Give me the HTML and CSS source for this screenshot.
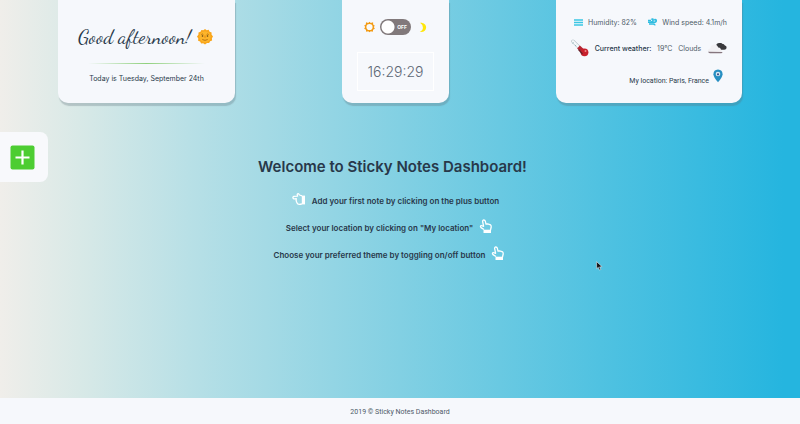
FILE: index.html
```html
<!DOCTYPE html>
<html lang="en">
<head>
<meta charset="utf-8">
<title>Sticky Notes Dashboard</title>
<link rel="stylesheet" href="styles.css">
</head>
<body>
<svg class="defs" aria-hidden="true">
  <symbol id="hand" viewBox="0 0 14 15">
    <path d="M5 10.500L2 8.600Q.8 7.200 2.200 6.500L4.600 7.300 3.600 2.400Q3.600 1 4.800 1T6.300 2.200L7 5.200l1.600-.4 1.600.5 1.300.5q.8.700.7 2.200L11.500 11" fill="none" stroke="#fff" stroke-width="1.300" stroke-linejoin="round"/>
    <path d="M4.500 10.700h7.500v3.300H4.500z" fill="#fff"/>
  </symbol>
  <symbol id="hand-left" viewBox="0 0 14 13">
    <path d="M10 2.800L7.500 2 6.700.8Q5.400.3 5.200 1.600L5.600 3.200 1.800 3.300Q.600 3.800 1 5T2.600 5.800L4.300 5.600 4.100 7.300 4.600 9 5.500 10.800Q7 11.800 10 10.800" fill="none" stroke="#fff" stroke-width="1.300" stroke-linejoin="round"/>
    <path d="M9.800 2.600h3.200v8.800H9.800z" fill="#fff"/>
  </symbol>
</svg>
<header class="top">
  <section class="card greeting">
    <h2 class="hello">Good afternoon!
      <svg class="face" viewBox="0 0 16 16" aria-hidden="true">
        <path d="M8 0l1.700 1.200 2-.4.900 1.900 2 .7-.1 2.100L16 7.500 14.900 9.300l.2 2.100-2 .8-1 1.900-2.100-.2L8 15.600l-1.800-1.400-2.100.2-1-1.900-2-.8.2-2.200L0 7.500l1.400-1.700.1-2.200 2-.8.900-1.900 2 .4z" fill="#f9a51a"/>
        <circle cx="8" cy="7.800" r="5.600" fill="#fdb52b"/>
        <path d="M4.300 5.500q1-1 2 0M9.700 5.500q1-1 2 0M5.300 10.500q2.700 1.700 5.400 0" fill="none" stroke="#a8630c" stroke-width=".8"/>
        <circle cx="5.500" cy="7" r=".8" fill="#60400f"/><circle cx="10.500" cy="7" r=".8" fill="#60400f"/>
        <path d="M8 6.500v2.200" stroke="#e6820f"/>
      </svg>
    </h2>
    <hr class="rule">
    <p class="date">Today is Tuesday, September 24th</p>
  </section>
  <section class="card clock">
    <div class="theme">
      <svg class="sun" viewBox="0 0 12 12" aria-hidden="true">
        <path d="M6 .2l1.400 1.500 2.500-.8.100 2.400 1.800 1.200L10.700 6l1.100 1.800-1.900 1.100-.3 2.200-2.200-.6L6 11.800l-1.400-1.300-2.200.6-.3-2.200L.2 7.800 1.300 6 .2 4.300 2 3.300 2.200.9l2.400.8z" fill="#f39a12"/>
        <circle cx="6" cy="6" r="3.400" fill="#fafaf7"/>
      </svg>
      <label class="switch">
        <input type="checkbox" aria-label="Dark theme">
        <span class="off">OFF</span>
      </label>
      <svg class="moon" viewBox="0 0 8 12" aria-hidden="true"><path d="M.8.800C5 .6 7.500 3 7.400 6S5 11.500.500 10.900Q4 9.200 3.900 6T.8.800z" fill="#ffe70c"/></svg>
    </div>
    <time class="time">16:29:29</time>
  </section>
  <section class="card weather">
    <div class="stats">
      <span class="stat">
        <svg class="bars" viewBox="0 0 9 7" aria-hidden="true"><path d="M0 1h9M0 3.500h9M0 6h9" stroke="#3bc6e3" stroke-width="1.300"/></svg>
        Humidity: 82%
      </span>
      <span class="stat">
        <svg class="wind" viewBox="0 0 9 8" aria-hidden="true"><path d="M0 2.500h3M0 4.200h7Q8.700 3.500 8 1.800 7 1 6.500 2.500M1 6h4.500q1.500.2 1 1.300M3 4Q5.500 3.500 5 1.200q-1-.7-1.400.5" fill="none" stroke="#2fbce0" stroke-width="1.600"/></svg>
        Wind speed: 4.1m/h
      </span>
    </div>
    <div class="current">
      <svg class="thermo" viewBox="0 0 18 18" aria-hidden="true">
        <path d="M2 2.300L8 8.300" stroke="#b9c6cc" stroke-width="3.600" stroke-linecap="round"/>
        <path d="M2 2.300L8 8.300" stroke="#f7f9fb" stroke-width="2.300" stroke-linecap="round"/>
        <path d="M1.500 4.500l1.200-1M4 7l1.200-1" stroke="#78a9ad" stroke-width=".7"/>
        <path d="M7.500 8L13 13" stroke="#b62632" stroke-width="4"/>
        <circle cx="13.500" cy="13.300" r="3.900" fill="#c8202c"/>
        <path d="M7.500 10.500l4 4.500" stroke="#692028" stroke-width="1.200"/>
        <circle cx="14.500" cy="12" r="1" fill="#ee8986"/>
      </svg>
      <strong class="label">Current weather:</strong>
      <span>19°C</span>
      <span>Clouds</span>
      <svg class="cloud" viewBox="0 0 20 12" aria-hidden="true">
        <path d="M9 4q.5-3.500 4-3 1.600-.5 2.600 1 1.500-.2 2 1.200 2.400.8 2 2.700-.5 2-2.600 1.800h-4z" fill="#39393c"/>
        <path d="M3 10Q.5 10 1 8q.5-1.500 2.300-1.500Q4 2.700 7.200 2.500q3 0 4 3 2.300-.3 2.700 2 1.800 1 .4 2.500z" fill="#f2f1f4"/>
        <path d="M1 9.700q1 1.800 2.600 1.600H14q1.300-.2 1.500-1.400z" fill="#86767e"/>
      </svg>
    </div>
    <a class="place" href="#location">My location: Paris, France
      <svg class="pin" viewBox="0 0 10 14" aria-hidden="true">
        <path d="M5 .5Q.5.800.400 5.200.5 8 5 13.300 9.500 8 9.600 5.200 9.500.8 5 .5z" fill="#278fc2"/>
        <circle cx="5" cy="5" r="2.300" fill="#d9e9f3"/><circle cx="5" cy="5.300" r="1.100" fill="#384c85"/>
      </svg>
    </a>
  </section>
</header>
<main class="board">
  <button class="add" aria-label="Add note">
    <svg viewBox="0 0 25 25" aria-hidden="true"><rect x=".5" y=".5" width="24" height="24" rx="2" fill="#4dcd32"/><path d="M5.500 12.500h14M12.500 5.500v14" stroke="#fff" stroke-width="2.200"/></svg>
  </button>
  <div class="intro">
    <h1>Welcome to Sticky Notes Dashboard!</h1>
    <p class="lead"><svg class="hand" aria-hidden="true"><use href="#hand-left"/></svg>Add your first note by clicking on the plus button</p>
    <p>Select your location by clicking on "My location"<svg class="hand" aria-hidden="true"><use href="#hand"/></svg></p>
    <p>Choose your preferred theme by toggling on/off button<svg class="hand" aria-hidden="true"><use href="#hand"/></svg></p>
  </div>
</main>
<footer class="foot">2019 © Sticky Notes Dashboard</footer>
<svg class="cursor" viewBox="0 0 7 10" aria-hidden="true"><path d="M.6.700v7l1.700-1.400 1.100 2.800 1.400-.6-1.200-2.600 2.500-.2z" fill="#141014" stroke="#e3e8ef" stroke-width=".6"/></svg>
</body>
</html>
```
FILE: styles.css
```css
* { box-sizing: border-box; }

body {
  margin: 0;
  min-height: 100vh;
  display: flex;
  flex-direction: column;
  font-family: Inter, "Liberation Sans", sans-serif;
  font-size: 7px;
  color: #28384a;
  background: linear-gradient(to right, #f0eeea 0%, #d8e9e7 10%, #b5dfe6 25%, #82d0e3 50%, #50c2e1 75%, #25b5df 98%);
}

h1, h2, p { margin: 0; }
svg { display: block; flex: none; }
.defs { position: absolute; width: 0; height: 0; }

.top {
  display: flex;
  justify-content: space-between;
  padding: 0 58px;
}

.card {
  height: 103px;
  background: #f6f8fc;
  border-radius: 0 0 10px 10px;
  box-shadow: 1px 3px 1px rgba(90, 110, 120, .3);
}

.greeting { width: 177px; padding: 24px 20px 0; text-align: center; }
.hello {
  display: flex;
  align-items: center;
  justify-content: space-between;
  height: 26px;
  padding-right: 2px;
  font: 400 20px "Dancing Script", cursive;
  white-space: nowrap;
}
.face { width: 16px; height: 16px; }
.rule {
  height: 1px;
  margin: 13px 10px 10px;
  border: 0;
  background: linear-gradient(to right, transparent, #8fd07d, transparent);
}
.date { line-height: 10px; white-space: nowrap; }

.clock { width: 107px; padding: 19px 15px 0; }
.theme { display: flex; align-items: center; justify-content: center; gap: 5px; }
.sun { width: 11px; height: 12px; }
.moon { width: 8px; height: 11px; margin-left: 3px; }
.switch { display: grid; align-items: center; }
.switch input {
  grid-area: 1 / 1;
  appearance: none;
  width: 31px;
  height: 16px;
  margin: 0;
  border-radius: 8px;
  background: radial-gradient(circle at 8px 8px, #fff 6px, transparent 7px), #81797b;
}
.off {
  grid-area: 1 / 1;
  justify-self: end;
  padding-right: 4px;
  font-size: 5px;
  font-weight: 700;
  color: #fff;
}
.time {
  display: block;
  margin-top: 17px;
  border: 1px solid #fff;
  font-size: 14px;
  font-weight: 300;
  line-height: 37px;
  text-align: center;
  color: #5e6876;
}

.weather { width: 186px; padding: 17px 15px 0; }
.stats, .stat, .current, .place { display: flex; align-items: center; white-space: nowrap; }
.stats { justify-content: space-between; height: 10px; padding-left: 3px; color: #4e5b68; }
.stat { gap: 5px; }
.bars { width: 9px; height: 7px; }
.wind { width: 9px; height: 8px; }
.current { justify-content: space-between; height: 18px; margin-top: 12px; color: #4e5b68; }
.thermo { width: 18px; height: 18px; }
.label { font-weight: 500; color: #28384a; }
.cloud { width: 20px; height: 12px; }
.place {
  justify-content: flex-end;
  gap: 4px;
  margin: 12px 4px 0 0;
  color: inherit;
  text-decoration: none;
  align-items: flex-end;
}
.pin { width: 10px; height: 14px; margin-bottom: 2px; }
.place, .foot { font-family: Roboto, Inter, sans-serif; }

.board { flex: 1; display: flex; align-items: flex-start; padding-top: 29px; }
.add {
  width: 48px;
  height: 50px;
  padding: 0 0 0 10px;
  border: 0;
  border-radius: 0 8px 8px 0;
  background: #f8f9fc;
}
.add svg { width: 25px; height: 25px; }

.intro {
  flex: 1;
  display: flex;
  flex-direction: column;
  align-items: center;
  padding: 25px 63px 0 0;
}
.intro h1 { margin-bottom: 10px; font-size: 15px; font-weight: 600; line-height: 20px; }
.intro p {
  display: flex;
  align-items: center;
  gap: 6px;
  height: 27px;
  padding-right: 6px;
  font-size: 8px;
  font-weight: 600;
}
.intro .lead { padding: 0 0 0 6px; }
.hand { width: 14px; height: 15px; margin-bottom: 3px; }

.foot {
  height: 26px;
  background: #f6f8fc;
  line-height: 28px;
  text-align: center;
  color: #4e5b68;
}

.cursor { position: absolute; left: 596px; top: 261px; width: 7px; height: 10px; }
```
